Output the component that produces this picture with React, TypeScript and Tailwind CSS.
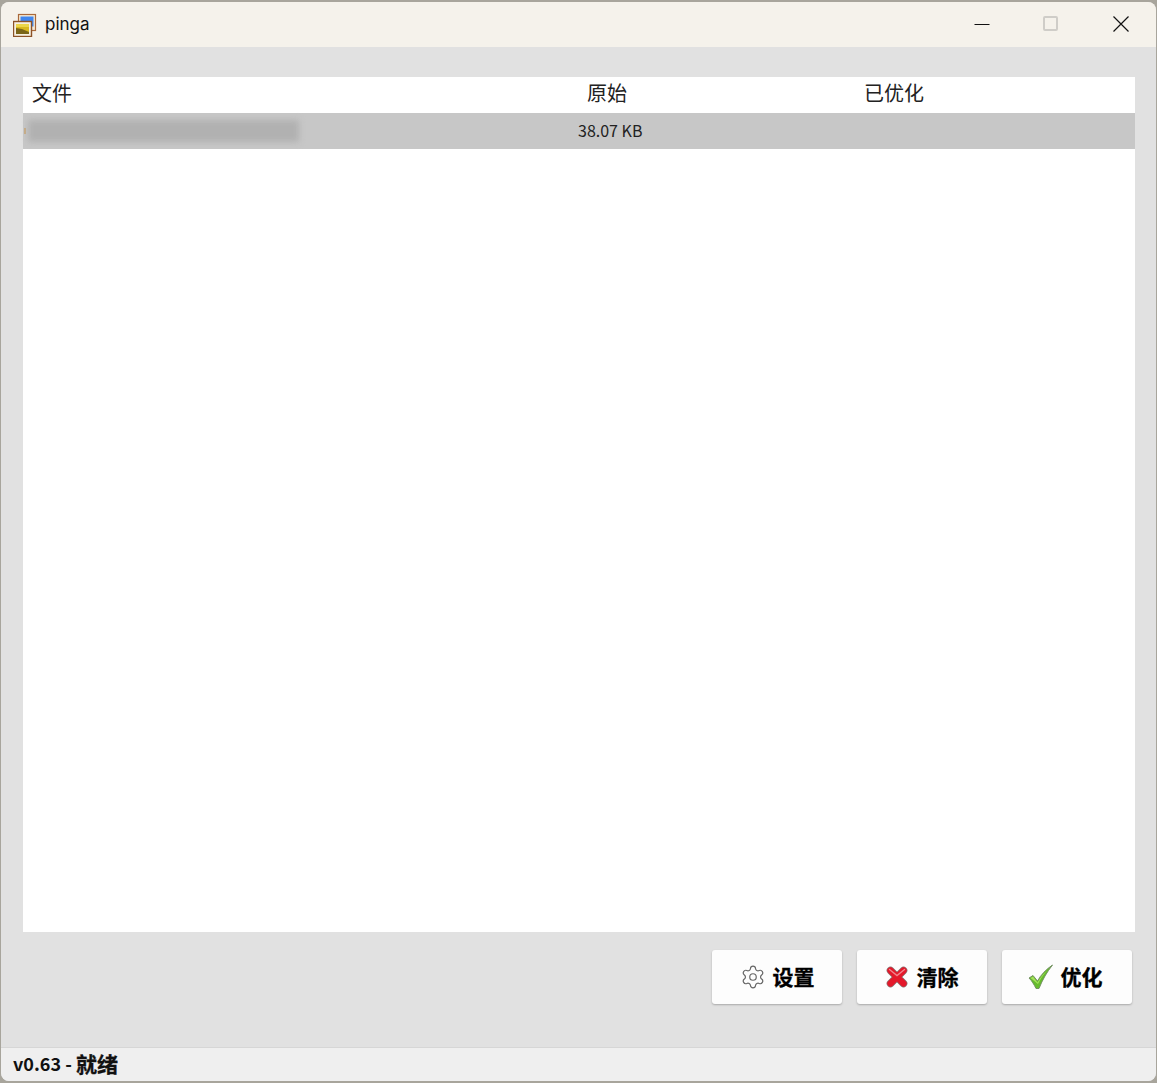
import React from 'react';
import { Settings } from 'lucide-react';

const FONT = '[font-family:"Noto_Sans_CJK_SC","Noto_Sans",sans-serif]';

function AppIcon() {
  return (
    <svg width="24" height="24" viewBox="0 0 24 24" className="shrink-0">
      <rect x="5.5" y="1.5" width="17" height="16" fill="#f4ead8" stroke="#a9693a" strokeWidth="1.2" />
      <rect x="7.5" y="3.5" width="13" height="10" fill="#3f86ee" />
      <rect x="0.5" y="8.5" width="18" height="15" fill="#f6efdf" stroke="#8c5227" strokeWidth="1.4" />
      <rect x="3" y="11" width="13" height="10" fill="#d9b91f" />
      <path d="M3 15 L9 16 L16 19 L16 21 L3 21 Z" fill="#7a6518" />
      <rect x="3" y="11" width="13" height="3" fill="#ecd64a" />
    </svg>
  );
}

function RedX() {
  return (
    <svg width="22" height="22" viewBox="0 0 22 22">
      <path d="M4.5 4.5 L17.5 17.5 M17.5 4.5 L4.5 17.5" stroke="#8a7070" strokeWidth="7.6" strokeLinecap="round" />
      <path d="M4.5 4.5 L17.5 17.5 M17.5 4.5 L4.5 17.5" stroke="#e4182a" strokeWidth="6.2" strokeLinecap="round" />
      <path d="M3.5 3.5 L11 9.5 L18.5 3.5" fill="none" stroke="#f2838c" strokeWidth="1.4" strokeLinecap="round" />
    </svg>
  );
}

function GreenCheck() {
  return (
    <svg width="26" height="26" viewBox="0 0 26 26">
      <path
        d="M1 14 L5 11.5 L9.5 17 C13 10.5 18 5.5 24.5 1 C19 8 14.5 15.5 11 24.5 L8 24.5 C6 20.5 4 17 1 14 Z"
        fill="#66bc2c"
        stroke="#6d8a5c"
        strokeWidth="0.9"
        strokeLinejoin="round"
      />
      <path d="M2.5 14 L5 12.5 L9.5 18.5 C12 14 15 10 19 6.5 C15 11 12 15.5 10 20 Z" fill="#a5e05c" />
    </svg>
  );
}

function ActionButton({ icon, label, extra }: { icon: React.ReactNode; label: string; extra: string }) {
  return (
    <button
      type="button"
      className={`flex h-[54px] w-[130px] items-center justify-center rounded-[3px] bg-[#fdfdfd] text-[21px] font-bold leading-none text-black shadow-[0_1px_2px_rgba(0,0,0,0.25)] ${extra}`}
    >
      {icon}
      <span className="pb-[2px] [-webkit-text-stroke:0.3px_#000]">{label}</span>
    </button>
  );
}

export default function App() {
  return (
    <div className={`h-[1083px] w-[1157px] overflow-hidden bg-[#a8a59c] p-px pt-[2px] ${FONT}`}>
      <div className="flex h-[1079px] w-[1155px] flex-col overflow-hidden rounded-[8px] bg-[#e1e1e1]">
        {/* Title bar */}
        <div className="flex h-[45px] shrink-0 items-center bg-[#f5f2eb] pl-[12px]">
          <AppIcon />
          <span className="ml-[8px] text-[17px] leading-none text-[#111] [font-family:Inter,sans-serif]">pinga</span>
          <div className="ml-auto flex items-center pb-[2px]">
            <svg width="16" height="16" viewBox="0 0 16 16" className="mr-[53px]">
              <path d="M0.5 8.5 H15.5" stroke="#111" strokeWidth="1" />
            </svg>
            <div className="mr-[55px] h-[15px] w-[15px] rounded-[2px] border-2 border-[#cfcdc8]" />
            <svg width="16" height="16" viewBox="0 0 16 16" className="mr-[27px]">
              <path d="M0.5 0.5 L15.5 15.5 M15.5 0.5 L0.5 15.5" stroke="#111" strokeWidth="1.2" />
            </svg>
          </div>
        </div>

        {/* File list */}
        <div className="ml-[22px] mr-[21px] mt-[30px] h-[855px] shrink-0 bg-white">
          <div className="grid h-[36px] grid-cols-[555px_278px_1fr] items-center pb-[4px] pl-[9px] text-[20px] leading-none text-[#222]">
            <span>文件</span>
            <span>原始</span>
            <span className="-ml-px">已优化</span>
          </div>
          <div className="relative flex h-[36px] items-center bg-[#c7c7c7]">
            <div className="ml-px h-[6px] w-[2px] bg-[#c9ab80]" />
            <div className="ml-[2px] h-[22px] w-[271px] bg-[#b1b1b1] blur-[3px]" />
            <span className="absolute left-[555px] pb-[2px] text-[16px] leading-none text-[#222]">38.07 KB</span>
          </div>
        </div>

        {/* Actions */}
        <div className="mr-[22px] mt-[18px] flex shrink-0 justify-end gap-[15px] pr-[2px]">
          <ActionButton extra="gap-[7px]" icon={<Settings size={26} strokeWidth={1.1} color="#666" />} label="设置" />
          <ActionButton extra="gap-[9px]" icon={<RedX />} label="清除" />
          <ActionButton extra="gap-[7px] pr-[4px]" icon={<GreenCheck />} label="优化" />
        </div>

        {/* Status bar */}
        <div className="mt-auto flex h-[34px] shrink-0 items-center border-t border-[#d6d6d6] bg-[#efefef] pb-[3px] pl-[12px] font-bold leading-none text-[#111]">
          <span className="whitespace-pre text-[18px]">v0.63 - </span>
          <span className="text-[21px] [-webkit-text-stroke:0.3px_#111]">就绪</span>
        </div>
      </div>
    </div>
  );
}
